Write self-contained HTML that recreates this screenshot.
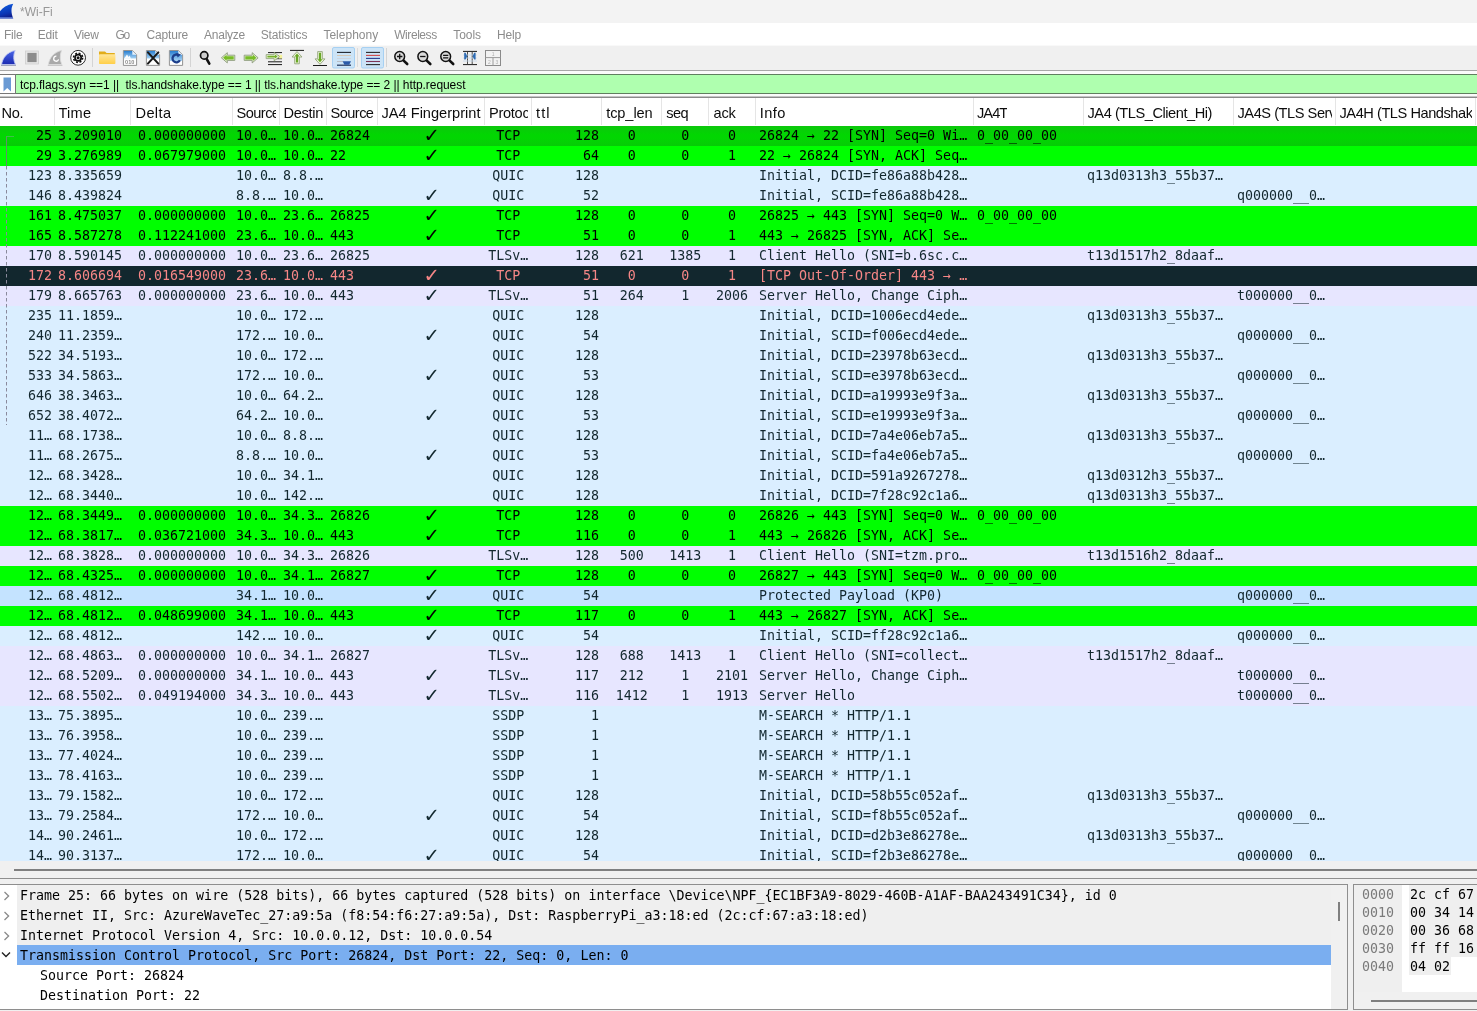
<!DOCTYPE html>
<html lang="en">
<head>
<meta charset="utf-8">
<title>*Wi-Fi</title>
<style>
html,body{margin:0;padding:0;}
body{width:1477px;height:1011px;overflow:hidden;background:#f0f0f0;position:relative;
 font-family:"Liberation Sans",sans-serif;font-size:12px;color:#000;}
#win{position:absolute;left:0;top:0;width:1477px;height:1011px;overflow:hidden;background:#f0f0f0;will-change:transform;}
.a{position:absolute;}
.t{position:absolute;white-space:pre;line-height:1;}
#title{left:0;top:0;width:1477px;height:23px;background:#f3f3f3;}
#menu{left:0;top:23px;width:1477px;height:22px;background:#fff;}
#menu .t{top:6px;font-size:12px;color:#8c8c8c;}
#tool{left:0;top:45px;width:1477px;height:25px;background:#f0f0f0;border-bottom:1px solid #a8a8a8;box-shadow:inset 0 1px 0 #f9f9f9;}
#filter{left:0;top:74px;width:1477px;height:20px;background:#afffaf;box-sizing:border-box;border-top:1px solid #5f7f5f;border-bottom:1px solid #5f7f5f;}
#bm{left:0;top:74px;width:16px;height:20px;background:#fff;box-sizing:border-box;border-top:1px solid #777;border-bottom:1px solid #777;border-right:1px solid #777;}
#hdr{left:0;top:98px;width:1477px;height:28px;background:#fff;}
#hdr .t{top:8px;font-size:14.6px;color:#0c0c0c;}
#hdr .hs{position:absolute;top:0;width:1px;height:27px;background:#e5e5e5;}
#list{left:0;top:126px;width:1477px;height:735px;overflow:hidden;background:#daeeff;
 font-family:"DejaVu Sans Mono","Liberation Mono",monospace;font-size:13.3px;color:#12272e;}
.r{position:absolute;left:0;width:1477px;height:20px;}
.r span{position:absolute;top:0;height:20px;line-height:20px;white-space:pre;overflow:hidden;}
.g{background:#00ff00;color:#000;}
.s{background:linear-gradient(#0cc80c,#02d602 45%,#02d602 60%,#06cc06);color:#000;}
.b{background:#daeeff;}
.b2{background:#c4e3ff;}
.l{background:#e7e6ff;}
.d{background:#12272e;color:#f78787;}
.ck{font-family:"DejaVu Sans",sans-serif;font-size:19.5px;}
.mono{font-family:"DejaVu Sans Mono","Liberation Mono",monospace;font-size:13.3px;}
</style>
</head>
<body>
<div id="win">
<div id="title" class="a"><svg class="a" style="left:0;top:0" width="16" height="22" viewBox="0 0 16 22"><defs><linearGradient id="fin" x1="0" y1="0" x2="0.3" y2="1"><stop offset="0" stop-color="#0f62e6"/><stop offset="0.75" stop-color="#0a35b4"/><stop offset="1" stop-color="#10208c"/></linearGradient></defs><path d="M-3 18.6 C-2 12 3 5.5 13.2 3.8 C11 8 10.8 13 13.3 18.6 Z" fill="url(#fin)"/><path d="M-1 17.9 H13" stroke="#6f8fe4" stroke-width="1.2"/></svg><div class="t" style="left:20px;top:6px;font-size:12px;color:#979797">*Wi-Fi</div></div>
<div id="menu" class="a"><div class="t" id="m0" style="left:3.9px;letter-spacing:-0.216px">File</div><div class="t" id="m1" style="left:37.7px;letter-spacing:-0.164px">Edit</div><div class="t" id="m2" style="left:73.9px;letter-spacing:-0.236px">View</div><div class="t" id="m3" style="left:115.4px;letter-spacing:-1.321px">Go</div><div class="t" id="m4" style="left:146.5px;letter-spacing:-0.167px">Capture</div><div class="t" id="m5" style="left:204.1px;letter-spacing:-0.249px">Analyze</div><div class="t" id="m6" style="left:260.7px;letter-spacing:-0.147px">Statistics</div><div class="t" id="m7" style="left:323.4px;letter-spacing:0.01px">Telephony</div><div class="t" id="m8" style="left:394.2px;letter-spacing:-0.43px">Wireless</div><div class="t" id="m9" style="left:453.2px;letter-spacing:-0.029px">Tools</div><div class="t" id="m10" style="left:497.1px;letter-spacing:-0.164px">Help</div></div>
<div id="tool" class="a"><svg class="a" style="left:0;top:0" width="520" height="25" viewBox="0 45 520 25">
<defs>
<linearGradient id="gfin" x1="0" y1="0" x2="0" y2="1"><stop offset="0" stop-color="#4a66e8"/><stop offset="1" stop-color="#1a2ab0"/></linearGradient>
<linearGradient id="gfold" x1="0" y1="0" x2="0" y2="1"><stop offset="0" stop-color="#ffe69a"/><stop offset="1" stop-color="#ffcf48"/></linearGradient>
<linearGradient id="gdoc" x1="0" y1="0" x2="0" y2="1"><stop offset="0" stop-color="#2a7fd0"/><stop offset="1" stop-color="#a8d4f4"/></linearGradient>
<linearGradient id="ggrn" x1="0" y1="0" x2="0" y2="1"><stop offset="0" stop-color="#9ad03a"/><stop offset="1" stop-color="#5f9a1e"/></linearGradient>
</defs>
<!-- start capture: blue fin -->
<path d="M1.6 64.6 C2.4 58 7 52.2 15.2 50.4 C13.2 55 13.3 60.2 15.5 64.6 Z" fill="url(#gfin)" stroke="#c4ccf4" stroke-width="0.9"/>
<path d="M1 65.4 H16" stroke="#9aa0b8" stroke-width="1"/>
<!-- stop: gray square -->
<rect x="25.5" y="51" width="13" height="13" fill="#e6e6e6" stroke="#cfcfcf" stroke-width="0.8"/>
<rect x="27.4" y="52.9" width="9.2" height="9.2" fill="#8c8c8c"/>
<!-- restart: gray fin -->
<path d="M48.4 64.6 C49.2 58 53.8 52.2 61.5 50.4 C59.8 55 59.9 60.2 61.8 64.6 Z" fill="#a9a9a9" stroke="#dcdcdc" stroke-width="0.9"/>
<path d="M56.4 56.2 A2.5 2.5 0 1 0 58.6 59.4" fill="none" stroke="#fff" stroke-width="1.3"/>
<path d="M47.8 65.4 H62.4" stroke="#c4c4c4" stroke-width="1"/>
<!-- options: gear -->
<circle cx="78.1" cy="57.8" r="7.4" fill="#fff" stroke="#2a2a2a" stroke-width="1"/>
<circle cx="78.1" cy="57.8" r="4.6" fill="none" stroke="#111" stroke-width="1.5" stroke-dasharray="1.95 1.66"/>
<circle cx="78.1" cy="57.8" r="3.1" fill="none" stroke="#111" stroke-width="1.7"/>
<circle cx="78.1" cy="57.8" r="1.5" fill="#111"/>
<!-- separator -->
<path d="M92.5 48 V67" stroke="#d4d4d4" stroke-width="1"/>
<!-- open: folder -->
<path d="M99 51.4 H105 L106.6 53 H114.8 V56 H99 Z" fill="#e2ad1a"/>
<rect x="99" y="54.2" width="16.4" height="9.8" rx="0.8" fill="url(#gfold)"/>
<!-- save: document -->
<path d="M123.4 50.5 H132.4 L136.6 54.7 V65.4 H123.4 Z" fill="#fff" stroke="#878787" stroke-width="0.9"/>
<path d="M123.9 51 H132.2 L136.1 54.9 V58.6 H123.9 Z" fill="url(#gdoc)"/>
<path d="M132.3 50.8 V54.8 H136.3 Z" fill="#e8f2fb"/>
<path d="M124 58.8 L127 54.4 L128.6 57 L129.6 55.6 L131 58.8 Z" fill="#fff" opacity="0.95"/>
<text x="125.1" y="64.2" font-family="Liberation Sans,sans-serif" font-size="5.6" font-weight="bold" fill="#8a8a8a">010</text>
<!-- close: document + X -->
<path d="M146.4 50.5 H155.4 L159.6 54.7 V65.4 H146.4 Z" fill="#fff" stroke="#878787" stroke-width="0.9"/>
<path d="M146.9 51 H155.2 L159.1 54.9 V58.6 H146.9 Z" fill="url(#gdoc)"/>
<path d="M155.3 50.8 V54.8 H159.3 Z" fill="#e8f2fb"/>
<path d="M147.9 52.4 L158.3 63.6 M158.3 52.4 L147.9 63.6" stroke="#1a1a1a" stroke-width="2.1" stroke-linecap="round"/>
<!-- reload: document + arrow -->
<path d="M169.4 50.5 H178.4 L182.6 54.7 V65.4 H169.4 Z" fill="#fff" stroke="#878787" stroke-width="0.9"/>
<path d="M169.9 51 H178.2 L182.1 54.9 V61 H169.9 Z" fill="url(#gdoc)"/>
<path d="M178.3 50.8 V54.8 H182.3 Z" fill="#e8f2fb"/>
<path d="M178.6 55.2 A3.9 3.9 0 1 0 179.9 60.2" fill="none" stroke="#1d3f8c" stroke-width="2.3"/>
<path d="M176.6 53 L181 54.6 L177.6 57.6 Z" fill="#1d3f8c"/>
<!-- separator -->
<path d="M190.5 48 V67" stroke="#d4d4d4" stroke-width="1"/>
<!-- find -->
<circle cx="204.2" cy="55.4" r="3.7" fill="#cdcdcd" stroke="#111" stroke-width="1.7"/>
<path d="M206.6 58.8 L209.3 63.6" stroke="#111" stroke-width="2.6" stroke-linecap="round"/>
<!-- back -->
<path d="M221.4 57.8 L227.3 52.7 V55.2 H234.8 V60.4 H227.3 V62.9 Z" fill="#e4f0cf" stroke="#8b9a7a" stroke-width="0.9" stroke-linejoin="round"/>
<path d="M223.1 57.8 L226.5 54.8 V56.2 H233.7 V59.4 H226.5 V60.8 Z" fill="#78bc28"/>
<!-- forward -->
<path d="M258.1 57.8 L252.2 52.7 V55.2 H244.2 V60.4 H252.2 V62.9 Z" fill="#e4f0cf" stroke="#8b9a7a" stroke-width="0.9" stroke-linejoin="round"/>
<path d="M256.4 57.8 L253 54.8 V56.2 H245.3 V59.4 H253 V60.8 Z" fill="#78bc28"/>
<!-- go to packet -->
<path d="M268 52.6 H282 M276 55.6 H282 M276 58.7 H282 M268 61.8 H282 M268 64.6 H282" stroke="#1a1a1a" stroke-width="1"/>
<rect x="278.6" y="54.9" width="3.6" height="3.6" fill="#f4f29a"/>
<path d="M279.6 56.6 L274.2 52.4 V54.6 H266.2 V58.6 H274.2 V60.8 Z" fill="#eef6dc" stroke="#93a57c" stroke-width="0.9" stroke-linejoin="round"/>
<path d="M277.6 56.6 L275 54.6 V55.8 H267.4 V57.4 H275 V58.6 Z" fill="#74b02a"/>
<!-- go first -->
<path d="M290 50.4 H304" stroke="#1a1a1a" stroke-width="1"/>
<path d="M297 51.6 L302 57 H299.3 V63.8 H294.7 V57 H292 Z" fill="#eef6dc" stroke="#93a57c" stroke-width="0.9" stroke-linejoin="round"/>
<path d="M297 53.6 L299.6 56.6 H298.1 V62.6 H295.9 V56.6 H294.4 Z" fill="#6aa826"/>
<!-- go last -->
<path d="M313 65.5 H327" stroke="#1a1a1a" stroke-width="1"/>
<path d="M320 64.3 L325 58.9 H322.3 V51.6 H317.7 V58.9 H315 Z" fill="#eef6dc" stroke="#93a57c" stroke-width="0.9" stroke-linejoin="round"/>
<path d="M320 62.3 L322.6 59.3 H321.1 V52.8 H318.9 V59.3 H317.4 Z" fill="#6aa826"/>
<!-- auto scroll (checked) -->
<rect x="332.5" y="47.5" width="22" height="20.5" rx="1.5" fill="#cce4f7" stroke="#a6d0f2" stroke-width="1"/>
<path d="M337 52.4 H351" stroke="#20252e" stroke-width="1.1"/>
<path d="M337 55.5 H351" stroke="#d8c8b4" stroke-width="1"/>
<path d="M337 58.5 H351" stroke="#cfd4dc" stroke-width="1"/>
<path d="M337 61.5 H343" stroke="#b8bcc4" stroke-width="1"/>
<path d="M337 65.2 H351" stroke="#1e2f55" stroke-width="1.2"/>
<path d="M342.6 61.2 H351 L349.2 64.8 H344.4 Z" fill="#2a5aa8"/>
<!-- separator -->
<path d="M357.5 48 V67" stroke="#dcdcdc" stroke-width="1"/>
<!-- colorize (checked) -->
<rect x="361.5" y="47.5" width="22" height="20.5" rx="1.5" fill="#cce4f7" stroke="#a6d0f2" stroke-width="1"/>
<path d="M366 52.4 H380" stroke="#2a2a2a" stroke-width="1.1"/>
<path d="M366 55.4 H380" stroke="#d04848" stroke-width="1.1"/>
<path d="M366 58.4 H380" stroke="#283a8c" stroke-width="1.1"/>
<path d="M366 61.5 H380" stroke="#7c3458" stroke-width="1.1"/>
<path d="M366 64.6 H380" stroke="#2a2a2a" stroke-width="1.1"/>
<!-- separator -->
<path d="M386.5 48 V67" stroke="#d4d4d4" stroke-width="1"/>
<!-- zoom in -->
<path d="M403.4 60.4 L407.2 64" stroke="#111" stroke-width="2.6" stroke-linecap="round"/>
<circle cx="399.7" cy="56.5" r="4.9" fill="#dadada" stroke="#111" stroke-width="1.5"/>
<path d="M397 56.5 H402.4 M399.7 53.8 V59.2" stroke="#111" stroke-width="1.3"/>
<!-- zoom out -->
<path d="M426.5 60.4 L430.3 64" stroke="#111" stroke-width="2.6" stroke-linecap="round"/>
<circle cx="422.8" cy="56.5" r="4.9" fill="#dadada" stroke="#111" stroke-width="1.5"/>
<path d="M420.1 56.5 H425.5" stroke="#111" stroke-width="1.3"/>
<!-- zoom reset -->
<path d="M449.4 60.4 L453.2 64" stroke="#111" stroke-width="2.6" stroke-linecap="round"/>
<circle cx="445.7" cy="56.5" r="4.9" fill="#dadada" stroke="#111" stroke-width="1.5"/>
<path d="M443.1 55.3 H448.3 M443.1 57.8 H448.3" stroke="#111" stroke-width="1.2"/>
<!-- resize columns -->
<path d="M463 51.4 H477 M463 64.6 H477" stroke="#1a1a1a" stroke-width="1"/>
<path d="M467.5 51.4 V64.6 M472.2 51.4 V64.6" stroke="#3a3a3a" stroke-width="0.9"/>
<path d="M463 55 H477 M463 58 H477 M463 61 H477" stroke="#c4d8ee" stroke-width="0.8"/>
<path d="M464.2 52.8 H465.6 L467.2 56.2 L465.6 59.6 H464.2 Z M475.6 52.8 H474.2 L472.6 56.2 L474.2 59.6 H475.6 Z" fill="#2e6cb4"/>
<!-- layout -->
<rect x="485.5" y="50.5" width="15" height="15" fill="#f2f2f2" stroke="#8a8a8a" stroke-width="1"/>
<path d="M485.5 57.6 H500.5 M493 57.6 V65.5" stroke="#9a9a9a" stroke-width="1"/>
<text x="491.8" y="56.2" font-family="Liberation Sans,sans-serif" font-size="5" fill="#b0b0b0">1</text>
<text x="488" y="64" font-family="Liberation Sans,sans-serif" font-size="5" fill="#b0b0b0">2</text>
<text x="495.6" y="64" font-family="Liberation Sans,sans-serif" font-size="5" fill="#b0b0b0">3</text>
</svg>
</div>
<div class="a" style="left:0;top:71px;width:1477px;height:25px;background:#fbfbfb"></div><div id="filter" class="a"></div><div id="bm" class="a"><svg class="a" style="left:3px;top:2px" width="9" height="15" viewBox="0 0 9 15"><path d="M0.5 0.5 H8 V14.5 L4.2 11 L0.5 14.5 Z" fill="#6a9ad4"/></svg></div><div class="t" id="ftxt" style="left:20px;top:79px;font-size:12px;letter-spacing:-0.063px;color:#000">tcp.flags.syn ==1 ||  tls.handshake.type == 1 || tls.handshake.type == 2 || http.request</div>
<div class="a" style="left:0;top:96px;width:1477px;height:1px;background:#c4c4c4"></div><div class="a" style="left:0;top:97px;width:1477px;height:1px;background:#8a8a8a"></div>
<div id="hdr" class="a"><div class="t" id="h0" style="left:1.5px;max-width:49.0px;overflow:hidden;height:18px;letter-spacing:-0.359px">No.</div><div class="t" id="h1" style="left:58.5px;max-width:68.0px;overflow:hidden;height:18px;letter-spacing:0.203px">Time</div><div class="hs" style="left:54px"></div><div class="t" id="h2" style="left:135.5px;max-width:93.0px;overflow:hidden;height:18px;letter-spacing:0.358px">Delta</div><div class="hs" style="left:130px"></div><div class="t" id="h3" style="left:236.5px;max-width:39.0px;overflow:hidden;height:18px;letter-spacing:-0.55px">Source</div><div class="hs" style="left:232px"></div><div class="t" id="h4" style="left:283.5px;max-width:39.0px;overflow:hidden;height:18px;letter-spacing:-0.3px">Destination</div><div class="hs" style="left:279px"></div><div class="t" id="h5" style="left:330.5px;max-width:43.0px;overflow:hidden;height:18px;letter-spacing:-0.55px">Source Port</div><div class="hs" style="left:326px"></div><div class="t" id="h6" style="left:381.5px;max-width:99.0px;overflow:hidden;height:18px;letter-spacing:0.002px">JA4 Fingerprint</div><div class="hs" style="left:377px"></div><div class="t" id="h7" style="left:489px;max-width:38.5px;overflow:hidden;height:18px;letter-spacing:-0.3px">Protocol</div><div class="hs" style="left:484px"></div><div class="t" id="h8" style="left:536px;max-width:61.5px;overflow:hidden;height:18px;letter-spacing:1.124px">ttl</div><div class="hs" style="left:531px"></div><div class="t" id="h9" style="left:606.2px;max-width:51.299999999999955px;overflow:hidden;height:18px;letter-spacing:-0.095px">tcp_len</div><div class="hs" style="left:601px"></div><div class="t" id="h10" style="left:666.2px;max-width:38.299999999999955px;overflow:hidden;height:18px;letter-spacing:-0.516px">seq</div><div class="hs" style="left:661px"></div><div class="t" id="h11" style="left:713.4px;max-width:38.10000000000002px;overflow:hidden;height:18px;letter-spacing:-0.109px">ack</div><div class="hs" style="left:708px"></div><div class="t" id="h12" style="left:759.8px;max-width:209.70000000000005px;overflow:hidden;height:18px;letter-spacing:0.384px">Info</div><div class="hs" style="left:755px"></div><div class="t" id="h13" style="left:977px;max-width:102.5px;overflow:hidden;height:18px;letter-spacing:-0.925px">JA4T</div><div class="hs" style="left:973px"></div><div class="t" id="h14" style="left:1087.5px;max-width:142.0px;overflow:hidden;height:18px;letter-spacing:-0.446px">JA4 (TLS_Client_Hi)</div><div class="hs" style="left:1083px"></div><div class="t" id="h15" style="left:1237.5px;max-width:94.0px;overflow:hidden;height:18px;letter-spacing:-0.45px">JA4S (TLS Server</div><div class="hs" style="left:1233px"></div><div class="t" id="h16" style="left:1339.5px;max-width:132.0px;overflow:hidden;height:18px;letter-spacing:-0.45px">JA4H (TLS Handshake</div><div class="hs" style="left:1335px"></div><div class="hs" style="left:1475px"></div></div>
<div id="list" class="a"><div class="r s" style="top:0px"><span style="left:0px;width:52px;text-align:right">25</span><span style="left:58px;width:72px;text-align:left">3.209010</span><span style="left:131px;width:102px;text-align:center">0.000000000</span><span style="left:236px;width:43px;text-align:left">10.0…</span><span style="left:283px;width:43px;text-align:left">10.0…</span><span style="left:330px;width:47px;text-align:left">26824</span><span class="ck" style="left:378.2px;width:107.0px;text-align:center">✓</span><span style="left:484.7px;width:47.00000000000006px;text-align:center">TCP</span><span style="left:531px;width:68px;text-align:right">128</span><span style="left:601.8px;width:60.0px;text-align:center">0</span><span style="left:661.7px;width:47.0px;text-align:center">0</span><span style="left:708.5px;width:47.0px;text-align:center">0</span><span style="left:759px;width:214px;text-align:left">26824 → 22 [SYN] Seq=0 Wi…</span><span style="left:977px;width:106px;text-align:left">0_00_00_00</span></div><div class="r g" style="top:20px"><span style="left:0px;width:52px;text-align:right">29</span><span style="left:58px;width:72px;text-align:left">3.276989</span><span style="left:131px;width:102px;text-align:center">0.067979000</span><span style="left:236px;width:43px;text-align:left">10.0…</span><span style="left:283px;width:43px;text-align:left">10.0…</span><span style="left:330px;width:47px;text-align:left">22</span><span class="ck" style="left:378.2px;width:107.0px;text-align:center">✓</span><span style="left:484.7px;width:47.00000000000006px;text-align:center">TCP</span><span style="left:531px;width:68px;text-align:right">64</span><span style="left:601.8px;width:60.0px;text-align:center">0</span><span style="left:661.7px;width:47.0px;text-align:center">0</span><span style="left:708.5px;width:47.0px;text-align:center">1</span><span style="left:759px;width:214px;text-align:left">22 → 26824 [SYN, ACK] Seq…</span></div><div class="r b" style="top:40px"><span style="left:0px;width:52px;text-align:right">123</span><span style="left:58px;width:72px;text-align:left">8.335659</span><span style="left:236px;width:43px;text-align:left">10.0…</span><span style="left:283px;width:43px;text-align:left">8.8.…</span><span style="left:484.7px;width:47.00000000000006px;text-align:center">QUIC</span><span style="left:531px;width:68px;text-align:right">128</span><span style="left:759px;width:214px;text-align:left">Initial, DCID=fe86a88b428…</span><span style="left:1087px;width:146px;text-align:left">q13d0313h3_55b37…</span></div><div class="r b" style="top:60px"><span style="left:0px;width:52px;text-align:right">146</span><span style="left:58px;width:72px;text-align:left">8.439824</span><span style="left:236px;width:43px;text-align:left">8.8.…</span><span style="left:283px;width:43px;text-align:left">10.0…</span><span class="ck" style="left:378.2px;width:107.0px;text-align:center">✓</span><span style="left:484.7px;width:47.00000000000006px;text-align:center">QUIC</span><span style="left:531px;width:68px;text-align:right">52</span><span style="left:759px;width:214px;text-align:left">Initial, SCID=fe86a88b428…</span><span style="left:1237px;width:98px;text-align:left">q000000__0…</span></div><div class="r g" style="top:80px"><span style="left:0px;width:52px;text-align:right">161</span><span style="left:58px;width:72px;text-align:left">8.475037</span><span style="left:131px;width:102px;text-align:center">0.000000000</span><span style="left:236px;width:43px;text-align:left">10.0…</span><span style="left:283px;width:43px;text-align:left">23.6…</span><span style="left:330px;width:47px;text-align:left">26825</span><span class="ck" style="left:378.2px;width:107.0px;text-align:center">✓</span><span style="left:484.7px;width:47.00000000000006px;text-align:center">TCP</span><span style="left:531px;width:68px;text-align:right">128</span><span style="left:601.8px;width:60.0px;text-align:center">0</span><span style="left:661.7px;width:47.0px;text-align:center">0</span><span style="left:708.5px;width:47.0px;text-align:center">0</span><span style="left:759px;width:214px;text-align:left">26825 → 443 [SYN] Seq=0 W…</span><span style="left:977px;width:106px;text-align:left">0_00_00_00</span></div><div class="r g" style="top:100px"><span style="left:0px;width:52px;text-align:right">165</span><span style="left:58px;width:72px;text-align:left">8.587278</span><span style="left:131px;width:102px;text-align:center">0.112241000</span><span style="left:236px;width:43px;text-align:left">23.6…</span><span style="left:283px;width:43px;text-align:left">10.0…</span><span style="left:330px;width:47px;text-align:left">443</span><span class="ck" style="left:378.2px;width:107.0px;text-align:center">✓</span><span style="left:484.7px;width:47.00000000000006px;text-align:center">TCP</span><span style="left:531px;width:68px;text-align:right">51</span><span style="left:601.8px;width:60.0px;text-align:center">0</span><span style="left:661.7px;width:47.0px;text-align:center">0</span><span style="left:708.5px;width:47.0px;text-align:center">1</span><span style="left:759px;width:214px;text-align:left">443 → 26825 [SYN, ACK] Se…</span></div><div class="r l" style="top:120px"><span style="left:0px;width:52px;text-align:right">170</span><span style="left:58px;width:72px;text-align:left">8.590145</span><span style="left:131px;width:102px;text-align:center">0.000000000</span><span style="left:236px;width:43px;text-align:left">10.0…</span><span style="left:283px;width:43px;text-align:left">23.6…</span><span style="left:330px;width:47px;text-align:left">26825</span><span style="left:484.7px;width:47.00000000000006px;text-align:center">TLSv…</span><span style="left:531px;width:68px;text-align:right">128</span><span style="left:601.8px;width:60.0px;text-align:center">621</span><span style="left:661.7px;width:47.0px;text-align:center">1385</span><span style="left:708.5px;width:47.0px;text-align:center">1</span><span style="left:759px;width:214px;text-align:left">Client Hello (SNI=b.6sc.c…</span><span style="left:1087px;width:146px;text-align:left">t13d1517h2_8daaf…</span></div><div class="r d" style="top:140px"><span style="left:0px;width:52px;text-align:right">172</span><span style="left:58px;width:72px;text-align:left">8.606694</span><span style="left:131px;width:102px;text-align:center">0.016549000</span><span style="left:236px;width:43px;text-align:left">23.6…</span><span style="left:283px;width:43px;text-align:left">10.0…</span><span style="left:330px;width:47px;text-align:left">443</span><span class="ck" style="left:378.2px;width:107.0px;text-align:center">✓</span><span style="left:484.7px;width:47.00000000000006px;text-align:center">TCP</span><span style="left:531px;width:68px;text-align:right">51</span><span style="left:601.8px;width:60.0px;text-align:center">0</span><span style="left:661.7px;width:47.0px;text-align:center">0</span><span style="left:708.5px;width:47.0px;text-align:center">1</span><span style="left:759px;width:214px;text-align:left">[TCP Out-Of-Order] 443 → …</span></div><div class="r l" style="top:160px"><span style="left:0px;width:52px;text-align:right">179</span><span style="left:58px;width:72px;text-align:left">8.665763</span><span style="left:131px;width:102px;text-align:center">0.000000000</span><span style="left:236px;width:43px;text-align:left">23.6…</span><span style="left:283px;width:43px;text-align:left">10.0…</span><span style="left:330px;width:47px;text-align:left">443</span><span class="ck" style="left:378.2px;width:107.0px;text-align:center">✓</span><span style="left:484.7px;width:47.00000000000006px;text-align:center">TLSv…</span><span style="left:531px;width:68px;text-align:right">51</span><span style="left:601.8px;width:60.0px;text-align:center">264</span><span style="left:661.7px;width:47.0px;text-align:center">1</span><span style="left:708.5px;width:47.0px;text-align:center">2006</span><span style="left:759px;width:214px;text-align:left">Server Hello, Change Ciph…</span><span style="left:1237px;width:98px;text-align:left">t000000__0…</span></div><div class="r b" style="top:180px"><span style="left:0px;width:52px;text-align:right">235</span><span style="left:58px;width:72px;text-align:left">11.1859…</span><span style="left:236px;width:43px;text-align:left">10.0…</span><span style="left:283px;width:43px;text-align:left">172.…</span><span style="left:484.7px;width:47.00000000000006px;text-align:center">QUIC</span><span style="left:531px;width:68px;text-align:right">128</span><span style="left:759px;width:214px;text-align:left">Initial, DCID=1006ecd4ede…</span><span style="left:1087px;width:146px;text-align:left">q13d0313h3_55b37…</span></div><div class="r b" style="top:200px"><span style="left:0px;width:52px;text-align:right">240</span><span style="left:58px;width:72px;text-align:left">11.2359…</span><span style="left:236px;width:43px;text-align:left">172.…</span><span style="left:283px;width:43px;text-align:left">10.0…</span><span class="ck" style="left:378.2px;width:107.0px;text-align:center">✓</span><span style="left:484.7px;width:47.00000000000006px;text-align:center">QUIC</span><span style="left:531px;width:68px;text-align:right">54</span><span style="left:759px;width:214px;text-align:left">Initial, SCID=f006ecd4ede…</span><span style="left:1237px;width:98px;text-align:left">q000000__0…</span></div><div class="r b" style="top:220px"><span style="left:0px;width:52px;text-align:right">522</span><span style="left:58px;width:72px;text-align:left">34.5193…</span><span style="left:236px;width:43px;text-align:left">10.0…</span><span style="left:283px;width:43px;text-align:left">172.…</span><span style="left:484.7px;width:47.00000000000006px;text-align:center">QUIC</span><span style="left:531px;width:68px;text-align:right">128</span><span style="left:759px;width:214px;text-align:left">Initial, DCID=23978b63ecd…</span><span style="left:1087px;width:146px;text-align:left">q13d0313h3_55b37…</span></div><div class="r b" style="top:240px"><span style="left:0px;width:52px;text-align:right">533</span><span style="left:58px;width:72px;text-align:left">34.5863…</span><span style="left:236px;width:43px;text-align:left">172.…</span><span style="left:283px;width:43px;text-align:left">10.0…</span><span class="ck" style="left:378.2px;width:107.0px;text-align:center">✓</span><span style="left:484.7px;width:47.00000000000006px;text-align:center">QUIC</span><span style="left:531px;width:68px;text-align:right">53</span><span style="left:759px;width:214px;text-align:left">Initial, SCID=e3978b63ecd…</span><span style="left:1237px;width:98px;text-align:left">q000000__0…</span></div><div class="r b" style="top:260px"><span style="left:0px;width:52px;text-align:right">646</span><span style="left:58px;width:72px;text-align:left">38.3463…</span><span style="left:236px;width:43px;text-align:left">10.0…</span><span style="left:283px;width:43px;text-align:left">64.2…</span><span style="left:484.7px;width:47.00000000000006px;text-align:center">QUIC</span><span style="left:531px;width:68px;text-align:right">128</span><span style="left:759px;width:214px;text-align:left">Initial, DCID=a19993e9f3a…</span><span style="left:1087px;width:146px;text-align:left">q13d0313h3_55b37…</span></div><div class="r b" style="top:280px"><span style="left:0px;width:52px;text-align:right">652</span><span style="left:58px;width:72px;text-align:left">38.4072…</span><span style="left:236px;width:43px;text-align:left">64.2…</span><span style="left:283px;width:43px;text-align:left">10.0…</span><span class="ck" style="left:378.2px;width:107.0px;text-align:center">✓</span><span style="left:484.7px;width:47.00000000000006px;text-align:center">QUIC</span><span style="left:531px;width:68px;text-align:right">53</span><span style="left:759px;width:214px;text-align:left">Initial, SCID=e19993e9f3a…</span><span style="left:1237px;width:98px;text-align:left">q000000__0…</span></div><div class="r b" style="top:300px"><span style="left:0px;width:52px;text-align:right">11…</span><span style="left:58px;width:72px;text-align:left">68.1738…</span><span style="left:236px;width:43px;text-align:left">10.0…</span><span style="left:283px;width:43px;text-align:left">8.8.…</span><span style="left:484.7px;width:47.00000000000006px;text-align:center">QUIC</span><span style="left:531px;width:68px;text-align:right">128</span><span style="left:759px;width:214px;text-align:left">Initial, DCID=7a4e06eb7a5…</span><span style="left:1087px;width:146px;text-align:left">q13d0313h3_55b37…</span></div><div class="r b" style="top:320px"><span style="left:0px;width:52px;text-align:right">11…</span><span style="left:58px;width:72px;text-align:left">68.2675…</span><span style="left:236px;width:43px;text-align:left">8.8.…</span><span style="left:283px;width:43px;text-align:left">10.0…</span><span class="ck" style="left:378.2px;width:107.0px;text-align:center">✓</span><span style="left:484.7px;width:47.00000000000006px;text-align:center">QUIC</span><span style="left:531px;width:68px;text-align:right">53</span><span style="left:759px;width:214px;text-align:left">Initial, SCID=fa4e06eb7a5…</span><span style="left:1237px;width:98px;text-align:left">q000000__0…</span></div><div class="r b" style="top:340px"><span style="left:0px;width:52px;text-align:right">12…</span><span style="left:58px;width:72px;text-align:left">68.3428…</span><span style="left:236px;width:43px;text-align:left">10.0…</span><span style="left:283px;width:43px;text-align:left">34.1…</span><span style="left:484.7px;width:47.00000000000006px;text-align:center">QUIC</span><span style="left:531px;width:68px;text-align:right">128</span><span style="left:759px;width:214px;text-align:left">Initial, DCID=591a9267278…</span><span style="left:1087px;width:146px;text-align:left">q13d0312h3_55b37…</span></div><div class="r b" style="top:360px"><span style="left:0px;width:52px;text-align:right">12…</span><span style="left:58px;width:72px;text-align:left">68.3440…</span><span style="left:236px;width:43px;text-align:left">10.0…</span><span style="left:283px;width:43px;text-align:left">142.…</span><span style="left:484.7px;width:47.00000000000006px;text-align:center">QUIC</span><span style="left:531px;width:68px;text-align:right">128</span><span style="left:759px;width:214px;text-align:left">Initial, DCID=7f28c92c1a6…</span><span style="left:1087px;width:146px;text-align:left">q13d0313h3_55b37…</span></div><div class="r g" style="top:380px"><span style="left:0px;width:52px;text-align:right">12…</span><span style="left:58px;width:72px;text-align:left">68.3449…</span><span style="left:131px;width:102px;text-align:center">0.000000000</span><span style="left:236px;width:43px;text-align:left">10.0…</span><span style="left:283px;width:43px;text-align:left">34.3…</span><span style="left:330px;width:47px;text-align:left">26826</span><span class="ck" style="left:378.2px;width:107.0px;text-align:center">✓</span><span style="left:484.7px;width:47.00000000000006px;text-align:center">TCP</span><span style="left:531px;width:68px;text-align:right">128</span><span style="left:601.8px;width:60.0px;text-align:center">0</span><span style="left:661.7px;width:47.0px;text-align:center">0</span><span style="left:708.5px;width:47.0px;text-align:center">0</span><span style="left:759px;width:214px;text-align:left">26826 → 443 [SYN] Seq=0 W…</span><span style="left:977px;width:106px;text-align:left">0_00_00_00</span></div><div class="r g" style="top:400px"><span style="left:0px;width:52px;text-align:right">12…</span><span style="left:58px;width:72px;text-align:left">68.3817…</span><span style="left:131px;width:102px;text-align:center">0.036721000</span><span style="left:236px;width:43px;text-align:left">34.3…</span><span style="left:283px;width:43px;text-align:left">10.0…</span><span style="left:330px;width:47px;text-align:left">443</span><span class="ck" style="left:378.2px;width:107.0px;text-align:center">✓</span><span style="left:484.7px;width:47.00000000000006px;text-align:center">TCP</span><span style="left:531px;width:68px;text-align:right">116</span><span style="left:601.8px;width:60.0px;text-align:center">0</span><span style="left:661.7px;width:47.0px;text-align:center">0</span><span style="left:708.5px;width:47.0px;text-align:center">1</span><span style="left:759px;width:214px;text-align:left">443 → 26826 [SYN, ACK] Se…</span></div><div class="r l" style="top:420px"><span style="left:0px;width:52px;text-align:right">12…</span><span style="left:58px;width:72px;text-align:left">68.3828…</span><span style="left:131px;width:102px;text-align:center">0.000000000</span><span style="left:236px;width:43px;text-align:left">10.0…</span><span style="left:283px;width:43px;text-align:left">34.3…</span><span style="left:330px;width:47px;text-align:left">26826</span><span style="left:484.7px;width:47.00000000000006px;text-align:center">TLSv…</span><span style="left:531px;width:68px;text-align:right">128</span><span style="left:601.8px;width:60.0px;text-align:center">500</span><span style="left:661.7px;width:47.0px;text-align:center">1413</span><span style="left:708.5px;width:47.0px;text-align:center">1</span><span style="left:759px;width:214px;text-align:left">Client Hello (SNI=tzm.pro…</span><span style="left:1087px;width:146px;text-align:left">t13d1516h2_8daaf…</span></div><div class="r g" style="top:440px"><span style="left:0px;width:52px;text-align:right">12…</span><span style="left:58px;width:72px;text-align:left">68.4325…</span><span style="left:131px;width:102px;text-align:center">0.000000000</span><span style="left:236px;width:43px;text-align:left">10.0…</span><span style="left:283px;width:43px;text-align:left">34.1…</span><span style="left:330px;width:47px;text-align:left">26827</span><span class="ck" style="left:378.2px;width:107.0px;text-align:center">✓</span><span style="left:484.7px;width:47.00000000000006px;text-align:center">TCP</span><span style="left:531px;width:68px;text-align:right">128</span><span style="left:601.8px;width:60.0px;text-align:center">0</span><span style="left:661.7px;width:47.0px;text-align:center">0</span><span style="left:708.5px;width:47.0px;text-align:center">0</span><span style="left:759px;width:214px;text-align:left">26827 → 443 [SYN] Seq=0 W…</span><span style="left:977px;width:106px;text-align:left">0_00_00_00</span></div><div class="r b2" style="top:460px"><span style="left:0px;width:52px;text-align:right">12…</span><span style="left:58px;width:72px;text-align:left">68.4812…</span><span style="left:236px;width:43px;text-align:left">34.1…</span><span style="left:283px;width:43px;text-align:left">10.0…</span><span class="ck" style="left:378.2px;width:107.0px;text-align:center">✓</span><span style="left:484.7px;width:47.00000000000006px;text-align:center">QUIC</span><span style="left:531px;width:68px;text-align:right">54</span><span style="left:759px;width:214px;text-align:left">Protected Payload (KP0)</span><span style="left:1237px;width:98px;text-align:left">q000000__0…</span></div><div class="r g" style="top:480px"><span style="left:0px;width:52px;text-align:right">12…</span><span style="left:58px;width:72px;text-align:left">68.4812…</span><span style="left:131px;width:102px;text-align:center">0.048699000</span><span style="left:236px;width:43px;text-align:left">34.1…</span><span style="left:283px;width:43px;text-align:left">10.0…</span><span style="left:330px;width:47px;text-align:left">443</span><span class="ck" style="left:378.2px;width:107.0px;text-align:center">✓</span><span style="left:484.7px;width:47.00000000000006px;text-align:center">TCP</span><span style="left:531px;width:68px;text-align:right">117</span><span style="left:601.8px;width:60.0px;text-align:center">0</span><span style="left:661.7px;width:47.0px;text-align:center">0</span><span style="left:708.5px;width:47.0px;text-align:center">1</span><span style="left:759px;width:214px;text-align:left">443 → 26827 [SYN, ACK] Se…</span></div><div class="r b" style="top:500px"><span style="left:0px;width:52px;text-align:right">12…</span><span style="left:58px;width:72px;text-align:left">68.4812…</span><span style="left:236px;width:43px;text-align:left">142.…</span><span style="left:283px;width:43px;text-align:left">10.0…</span><span class="ck" style="left:378.2px;width:107.0px;text-align:center">✓</span><span style="left:484.7px;width:47.00000000000006px;text-align:center">QUIC</span><span style="left:531px;width:68px;text-align:right">54</span><span style="left:759px;width:214px;text-align:left">Initial, SCID=ff28c92c1a6…</span><span style="left:1237px;width:98px;text-align:left">q000000__0…</span></div><div class="r l" style="top:520px"><span style="left:0px;width:52px;text-align:right">12…</span><span style="left:58px;width:72px;text-align:left">68.4863…</span><span style="left:131px;width:102px;text-align:center">0.000000000</span><span style="left:236px;width:43px;text-align:left">10.0…</span><span style="left:283px;width:43px;text-align:left">34.1…</span><span style="left:330px;width:47px;text-align:left">26827</span><span style="left:484.7px;width:47.00000000000006px;text-align:center">TLSv…</span><span style="left:531px;width:68px;text-align:right">128</span><span style="left:601.8px;width:60.0px;text-align:center">688</span><span style="left:661.7px;width:47.0px;text-align:center">1413</span><span style="left:708.5px;width:47.0px;text-align:center">1</span><span style="left:759px;width:214px;text-align:left">Client Hello (SNI=collect…</span><span style="left:1087px;width:146px;text-align:left">t13d1517h2_8daaf…</span></div><div class="r l" style="top:540px"><span style="left:0px;width:52px;text-align:right">12…</span><span style="left:58px;width:72px;text-align:left">68.5209…</span><span style="left:131px;width:102px;text-align:center">0.000000000</span><span style="left:236px;width:43px;text-align:left">34.1…</span><span style="left:283px;width:43px;text-align:left">10.0…</span><span style="left:330px;width:47px;text-align:left">443</span><span class="ck" style="left:378.2px;width:107.0px;text-align:center">✓</span><span style="left:484.7px;width:47.00000000000006px;text-align:center">TLSv…</span><span style="left:531px;width:68px;text-align:right">117</span><span style="left:601.8px;width:60.0px;text-align:center">212</span><span style="left:661.7px;width:47.0px;text-align:center">1</span><span style="left:708.5px;width:47.0px;text-align:center">2101</span><span style="left:759px;width:214px;text-align:left">Server Hello, Change Ciph…</span><span style="left:1237px;width:98px;text-align:left">t000000__0…</span></div><div class="r l" style="top:560px"><span style="left:0px;width:52px;text-align:right">12…</span><span style="left:58px;width:72px;text-align:left">68.5502…</span><span style="left:131px;width:102px;text-align:center">0.049194000</span><span style="left:236px;width:43px;text-align:left">34.3…</span><span style="left:283px;width:43px;text-align:left">10.0…</span><span style="left:330px;width:47px;text-align:left">443</span><span class="ck" style="left:378.2px;width:107.0px;text-align:center">✓</span><span style="left:484.7px;width:47.00000000000006px;text-align:center">TLSv…</span><span style="left:531px;width:68px;text-align:right">116</span><span style="left:601.8px;width:60.0px;text-align:center">1412</span><span style="left:661.7px;width:47.0px;text-align:center">1</span><span style="left:708.5px;width:47.0px;text-align:center">1913</span><span style="left:759px;width:214px;text-align:left">Server Hello</span><span style="left:1237px;width:98px;text-align:left">t000000__0…</span></div><div class="r b" style="top:580px"><span style="left:0px;width:52px;text-align:right">13…</span><span style="left:58px;width:72px;text-align:left">75.3895…</span><span style="left:236px;width:43px;text-align:left">10.0…</span><span style="left:283px;width:43px;text-align:left">239.…</span><span style="left:484.7px;width:47.00000000000006px;text-align:center">SSDP</span><span style="left:531px;width:68px;text-align:right">1</span><span style="left:759px;width:214px;text-align:left">M-SEARCH * HTTP/1.1</span></div><div class="r b" style="top:600px"><span style="left:0px;width:52px;text-align:right">13…</span><span style="left:58px;width:72px;text-align:left">76.3958…</span><span style="left:236px;width:43px;text-align:left">10.0…</span><span style="left:283px;width:43px;text-align:left">239.…</span><span style="left:484.7px;width:47.00000000000006px;text-align:center">SSDP</span><span style="left:531px;width:68px;text-align:right">1</span><span style="left:759px;width:214px;text-align:left">M-SEARCH * HTTP/1.1</span></div><div class="r b" style="top:620px"><span style="left:0px;width:52px;text-align:right">13…</span><span style="left:58px;width:72px;text-align:left">77.4024…</span><span style="left:236px;width:43px;text-align:left">10.0…</span><span style="left:283px;width:43px;text-align:left">239.…</span><span style="left:484.7px;width:47.00000000000006px;text-align:center">SSDP</span><span style="left:531px;width:68px;text-align:right">1</span><span style="left:759px;width:214px;text-align:left">M-SEARCH * HTTP/1.1</span></div><div class="r b" style="top:640px"><span style="left:0px;width:52px;text-align:right">13…</span><span style="left:58px;width:72px;text-align:left">78.4163…</span><span style="left:236px;width:43px;text-align:left">10.0…</span><span style="left:283px;width:43px;text-align:left">239.…</span><span style="left:484.7px;width:47.00000000000006px;text-align:center">SSDP</span><span style="left:531px;width:68px;text-align:right">1</span><span style="left:759px;width:214px;text-align:left">M-SEARCH * HTTP/1.1</span></div><div class="r b" style="top:660px"><span style="left:0px;width:52px;text-align:right">13…</span><span style="left:58px;width:72px;text-align:left">79.1582…</span><span style="left:236px;width:43px;text-align:left">10.0…</span><span style="left:283px;width:43px;text-align:left">172.…</span><span style="left:484.7px;width:47.00000000000006px;text-align:center">QUIC</span><span style="left:531px;width:68px;text-align:right">128</span><span style="left:759px;width:214px;text-align:left">Initial, DCID=58b55c052af…</span><span style="left:1087px;width:146px;text-align:left">q13d0313h3_55b37…</span></div><div class="r b" style="top:680px"><span style="left:0px;width:52px;text-align:right">13…</span><span style="left:58px;width:72px;text-align:left">79.2584…</span><span style="left:236px;width:43px;text-align:left">172.…</span><span style="left:283px;width:43px;text-align:left">10.0…</span><span class="ck" style="left:378.2px;width:107.0px;text-align:center">✓</span><span style="left:484.7px;width:47.00000000000006px;text-align:center">QUIC</span><span style="left:531px;width:68px;text-align:right">54</span><span style="left:759px;width:214px;text-align:left">Initial, SCID=f8b55c052af…</span><span style="left:1237px;width:98px;text-align:left">q000000__0…</span></div><div class="r b" style="top:700px"><span style="left:0px;width:52px;text-align:right">14…</span><span style="left:58px;width:72px;text-align:left">90.2461…</span><span style="left:236px;width:43px;text-align:left">10.0…</span><span style="left:283px;width:43px;text-align:left">172.…</span><span style="left:484.7px;width:47.00000000000006px;text-align:center">QUIC</span><span style="left:531px;width:68px;text-align:right">128</span><span style="left:759px;width:214px;text-align:left">Initial, DCID=d2b3e86278e…</span><span style="left:1087px;width:146px;text-align:left">q13d0313h3_55b37…</span></div><div class="r b" style="top:720px"><span style="left:0px;width:52px;text-align:right">14…</span><span style="left:58px;width:72px;text-align:left">90.3137…</span><span style="left:236px;width:43px;text-align:left">172.…</span><span style="left:283px;width:43px;text-align:left">10.0…</span><span class="ck" style="left:378.2px;width:107.0px;text-align:center">✓</span><span style="left:484.7px;width:47.00000000000006px;text-align:center">QUIC</span><span style="left:531px;width:68px;text-align:right">54</span><span style="left:759px;width:214px;text-align:left">Initial, SCID=f2b3e86278e…</span><span style="left:1237px;width:98px;text-align:left">q000000__0…</span></div><svg class="a" style="left:0;top:0" width="20" height="300" viewBox="0 0 20 300"><path d="M6.5 10 V40" stroke="#5f8f6a" stroke-width="1" fill="none"/><path d="M6.5 10.5 H14" stroke="#3fbf4a" stroke-width="1" fill="none"/><path d="M6.5 40 V299" stroke="#8a8a9c" stroke-width="1" stroke-dasharray="3.5 2.5" fill="none"/></svg></div>
<div class="a" style="left:0;top:861px;width:1477px;height:17px;background:#f0f0f0"></div><div class="a" style="left:14px;top:869px;width:1463px;height:2px;background:#7f7f7f"></div><div class="a" style="left:0;top:878px;width:1477px;height:1px;background:#8e8e8e"></div><div class="a" style="left:0;top:884px;width:1348px;height:126px;background:#fff;box-sizing:border-box;border-top:1px solid #8e8e8e;border-bottom:1px solid #8e8e8e;border-right:1px solid #8e8e8e"></div><div class="a" style="left:17px;top:885px;width:1314px;height:60px;background:#efefef"></div><div class="a" style="left:17px;top:945px;width:1314px;height:20px;background:#7aaef0"></div><div class="a" style="left:1331px;top:885px;width:16px;height:124px;background:#f0f0f0"></div><div class="a" style="left:1338px;top:902px;width:2px;height:19px;background:#7f7f7f"></div><div class="t mono" style="left:20px;top:886px;height:20px;line-height:20px;color:#000">Frame 25: 66 bytes on wire (528 bits), 66 bytes captured (528 bits) on interface \Device\NPF_{EC1BF3A9-8029-460B-A1AF-BAA243491C34}, id 0</div><div class="t mono" style="left:20px;top:906px;height:20px;line-height:20px;color:#000">Ethernet II, Src: AzureWaveTec_27:a9:5a (f8:54:f6:27:a9:5a), Dst: RaspberryPi_a3:18:ed (2c:cf:67:a3:18:ed)</div><div class="t mono" style="left:20px;top:926px;height:20px;line-height:20px;color:#000">Internet Protocol Version 4, Src: 10.0.0.12, Dst: 10.0.0.54</div><div class="t mono" style="left:20px;top:946px;height:20px;line-height:20px;color:#000">Transmission Control Protocol, Src Port: 26824, Dst Port: 22, Seq: 0, Len: 0</div><div class="t mono" style="left:40px;top:966px;height:20px;line-height:20px;color:#000">Source Port: 26824</div><div class="t mono" style="left:40px;top:986px;height:20px;line-height:20px;color:#000">Destination Port: 22</div><svg class="a" style="left:3px;top:891px" width="8" height="10" viewBox="0 0 8 10"><path d="M1.5 1 L5.6 5 L1.5 9" fill="none" stroke="#8a8a8a" stroke-width="1.3"/></svg><svg class="a" style="left:3px;top:911px" width="8" height="10" viewBox="0 0 8 10"><path d="M1.5 1 L5.6 5 L1.5 9" fill="none" stroke="#8a8a8a" stroke-width="1.3"/></svg><svg class="a" style="left:3px;top:931px" width="8" height="10" viewBox="0 0 8 10"><path d="M1.5 1 L5.6 5 L1.5 9" fill="none" stroke="#8a8a8a" stroke-width="1.3"/></svg><svg class="a" style="left:1px;top:951px" width="10" height="8" viewBox="0 0 10 8"><path d="M1 1.5 L5 5.5 L9 1.5" fill="none" stroke="#222" stroke-width="1.4"/></svg><div class="a" style="left:1353px;top:884px;width:130px;height:126px;background:#fff;box-sizing:border-box;border:1px solid #8e8e8e"></div><div class="a" style="left:1354px;top:885px;width:48px;height:107px;background:#efefef"></div><div class="a" style="left:1409px;top:885px;width:68px;height:72px;background:#efefef"></div><div class="a" style="left:1409px;top:957px;width:42px;height:18px;background:#efefef"></div><div class="a" style="left:1354px;top:992px;width:123px;height:17px;background:#f0f0f0"></div><div class="a" style="left:1371px;top:1000px;width:106px;height:2px;background:#7f7f7f"></div><div class="t mono" style="left:1362px;top:886px;height:18px;line-height:18px;color:#7a7a7a">0000</div><div class="t mono" style="left:1410px;top:886px;height:18px;line-height:18px;color:#000">2c cf 67</div><div class="t mono" style="left:1362px;top:904px;height:18px;line-height:18px;color:#7a7a7a">0010</div><div class="t mono" style="left:1410px;top:904px;height:18px;line-height:18px;color:#000">00 34 14</div><div class="t mono" style="left:1362px;top:922px;height:18px;line-height:18px;color:#7a7a7a">0020</div><div class="t mono" style="left:1410px;top:922px;height:18px;line-height:18px;color:#000">00 36 68</div><div class="t mono" style="left:1362px;top:940px;height:18px;line-height:18px;color:#7a7a7a">0030</div><div class="t mono" style="left:1410px;top:940px;height:18px;line-height:18px;color:#000">ff ff 16</div><div class="t mono" style="left:1362px;top:958px;height:18px;line-height:18px;color:#7a7a7a">0040</div><div class="t mono" style="left:1410px;top:958px;height:18px;line-height:18px;color:#000">04 02</div>
</div>
</body>
</html>
